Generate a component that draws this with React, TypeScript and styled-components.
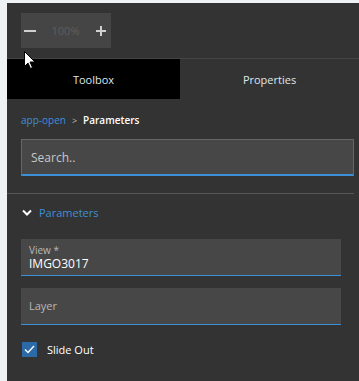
import React from "react";
import styled, { createGlobalStyle } from "styled-components";

const Global = createGlobalStyle`
    html, body {
        margin: 0;
        padding: 0;
        background: #eef2f5;
        font-family: "Open Sans", "Noto Sans", sans-serif;
    }
`;

const Panel = styled.div`
    position: relative;
    margin: 3px 0 0 7px;
    height: 378px;
    background: #333333;
    color: #e8e8e8;
    overflow: hidden;
`;

const ZoomArea = styled.div`
    height: 55px;
    padding: 10px 0 0 14px;
    box-sizing: border-box;
`;

const ZoomBox = styled.div`
    width: 90px;
    height: 35px;
    background: #454545;
    display: flex;
    align-items: center;
    justify-content: space-between;
    padding: 0 4px 0 3px;
    box-sizing: border-box;
`;

const ZoomButton = styled.span`
    width: 12px;
    display: flex;
    justify-content: center;
`;

const ZoomValue = styled.span`
    font-size: 11px;
    color: #5e5e5e;
`;

const Tabs = styled.div`
    display: grid;
    grid-template-columns: 173px 1fr;
    border-top: 1px solid #444;
    height: 40px;
`;

const Tab = styled.div<{ active?: boolean }>`
    display: flex;
    align-items: center;
    justify-content: center;
    font-size: 11px;
    background: ${p => (p.active ? "#000" : "transparent")};
    color: #dfe6ee;
`;

const Body = styled.div`
    padding: 0 5px 0 14px;
`;

const Breadcrumb = styled.div`
    height: 40px;
    display: flex;
    align-items: center;
    font-size: 10px;
    gap: 6px;
    padding-top: 2px;
    box-sizing: border-box;
`;

const Crumb = styled.span<{ current?: boolean }>`
    color: ${p => (p.current ? "#fff" : "#3d8fd8")};
    font-weight: ${p => (p.current ? 600 : 400)};
`;

const Sep = styled.span`
    color: #bbb;
    font-size: 9px;
`;

const Search = styled.div`
    height: 37px;
    background: #474747;
    border: 1px solid #666;
    border-bottom: 2px solid #3d8fd8;
    box-sizing: border-box;
    display: flex;
    align-items: center;
    padding-left: 9px;
    font-size: 12px;
    color: #c8c8c8;
`;

const Divider = styled.div`
    height: 1px;
    background: #555;
    margin: 17px 0 0 -14px;
`;

const SectionHead = styled.div`
    height: 37px;
    display: flex;
    align-items: center;
    gap: 7px;
    padding-left: 1px;
    font-size: 11px;
    color: #3d8fd8;
`;

const Fields = styled.div`
    padding-right: 13px;
    display: flex;
    flex-direction: column;
    gap: 12px;
    margin-top: 8px;
`;

const Field = styled.div`
    height: 37px;
    background: #474747;
    border-bottom: 1px solid #3d8fd8;
    box-sizing: border-box;
    display: flex;
    flex-direction: column;
    justify-content: center;
    padding-left: 8px;
`;

const Label = styled.span<{ small?: boolean }>`
    font-size: ${p => (p.small ? "10px" : "11px")};
    color: #b8b8b8;
    line-height: 14px;
`;

const Value = styled.span`
    font-size: 12px;
    color: #fff;
    line-height: 14px;
`;

const CheckRow = styled.div`
    display: flex;
    align-items: center;
    gap: 10px;
    margin-top: 17px;
    padding-left: 1px;
    font-size: 11px;
    color: #fff;
`;

const Box = styled.span`
    width: 15px;
    height: 15px;
    background: #2b6aa6;
    display: flex;
    align-items: center;
    justify-content: center;
`;

const Cursor = styled.svg`
    position: absolute;
    left: 17px;
    top: 48px;
`;

export default function App() {
    return (
        <>
            <Global />
            <Panel>
                <ZoomArea>
                    <ZoomBox>
                        <ZoomButton>
                            <svg width="12" height="12" viewBox="0 0 12 12">
                                <rect x="0" y="5" width="12" height="2" fill="#d0d0d0" />
                            </svg>
                        </ZoomButton>
                        <ZoomValue>100%</ZoomValue>
                        <ZoomButton>
                            <svg width="10" height="10" viewBox="0 0 10 10">
                                <rect x="0" y="4" width="10" height="2" fill="#d0d0d0" />
                                <rect x="4" y="0" width="2" height="10" fill="#d0d0d0" />
                            </svg>
                        </ZoomButton>
                    </ZoomBox>
                </ZoomArea>
                <Tabs>
                    <Tab active>Toolbox</Tab>
                    <Tab>Properties</Tab>
                </Tabs>
                <Body>
                    <Breadcrumb>
                        <Crumb>app-open</Crumb>
                        <Sep>&gt;</Sep>
                        <Crumb current>Parameters</Crumb>
                    </Breadcrumb>
                    <Search>Search..</Search>
                    <Divider />
                    <SectionHead>
                        <svg width="10" height="7" viewBox="0 0 10 7">
                            <path d="M1 1.5 L5 5.5 L9 1.5" stroke="#fff" strokeWidth="2" fill="none" />
                        </svg>
                        Parameters
                    </SectionHead>
                    <Fields>
                        <Field>
                            <Label small>View *</Label>
                            <Value>IMGO3017</Value>
                        </Field>
                        <Field>
                            <Label>Layer</Label>
                        </Field>
                    </Fields>
                    <CheckRow>
                        <Box>
                            <svg width="11" height="9" viewBox="0 0 11 9">
                                <path d="M1 4.5 L4 7.5 L10 1" stroke="#fff" strokeWidth="1.4" fill="none" />
                            </svg>
                        </Box>
                        Slide Out
                    </CheckRow>
                </Body>
                <Cursor width="12" height="19" viewBox="0 0 12 19">
                    <path d="M0.5 0.5 L0.5 15.5 L4 12 L6.5 17.5 L8.5 16.5 L6 11 L11 11 Z" fill="#fff" stroke="#000" strokeWidth="1" />
                </Cursor>
            </Panel>
        </>
    );
}
